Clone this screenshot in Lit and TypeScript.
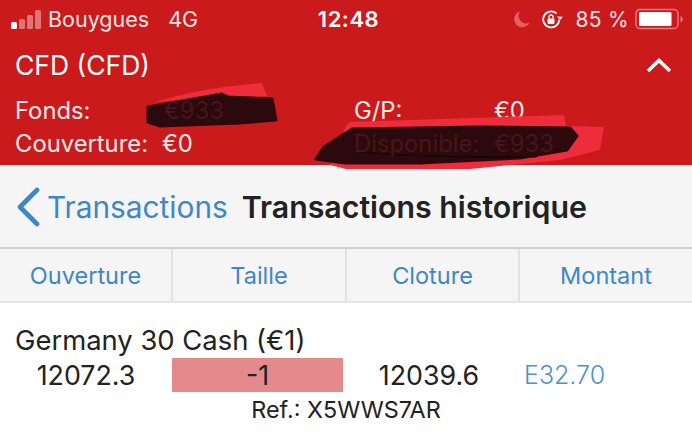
import { LitElement, html, css, svg } from "lit";
import { customElement } from "lit/decorators.js";

@customElement("app-root")
export class AppRoot extends LitElement {
  static styles = css`
    :host { display: block; width: 692px; height: 435px; overflow: hidden; position: relative; background: #fff; font-family: Inter, "Noto Sans", sans-serif; color: #222; }
    .red { background: #cb1a1c; color: #fff; height: 165px; display: flex; flex-direction: column; }
    .status { height: 38px; display: grid; grid-template-columns: 1fr auto 1fr; align-items: center; padding: 0 8px 0 11px; font-size: 21.5px; }
    .st-l { display: flex; align-items: center; color: #f8e4e4; white-space: nowrap; }
    .bars { display: flex; align-items: flex-end; gap: 2px; height: 19px; margin-right: 7px; }
    .bars i { width: 6px; border-radius: 1.5px; background: rgba(255,255,255,.4); display: block; }
    .bars i:first-child { background: #fff; }
    .net { margin-left: 19px; }
    .time { font-weight: 600; font-size: 22px; letter-spacing: .5px; margin-left: 2px; }
    .st-r { display: flex; align-items: center; justify-content: flex-end; color: #f8e4e4; }
    .pct { margin: 0 6px 0 13px; letter-spacing: .3px; white-space: nowrap; font-size: 21px; }
    .moon { margin-right: 12px; }
    .title { display: flex; justify-content: space-between; align-items: center; padding: 11px 20px 0 15px; font-size: 26.5px; height: 32px; }
    .stats { display: grid; grid-template-columns: 339px 140px auto; padding: 13px 0 0 15px; font-size: 23.8px; line-height: 33px; color: #fbeaea; }
    .stats div { white-space: nowrap; }
    .cov { display: flex; gap: 14px; }
    .fonds { display: flex; }
    .fonds span:first-child { width: 149px; }
    .hidden { position: relative; z-index: 2; color: #47151a; }
    .nav { height: 84px; background: #f5f5f5; border-bottom: 2px solid #cfcfcf; box-sizing: border-box; display: flex; align-items: center; padding: 2px 0 0 16px; }
    .nav svg { margin-right: 7px; flex: none; }
    .back { color: #3f86c8; font-size: 29.8px; margin-right: 14px; white-space: nowrap; }
    .h { font-weight: 600; font-size: 30.3px; color: #222; white-space: nowrap; }
    .tabs { height: 54px; background: #f5f5f5; border-bottom: 2px solid #e5e5e5; box-sizing: border-box; display: grid; grid-template-columns: 173px 174px 173px 172px; }
    .tabs div { display: flex; align-items: center; justify-content: center; color: #3f86c8; font-size: 23.5px; border-right: 2px solid #e2e2e2; }
    .tabs div:last-child { border-right: 0; }
    .body { padding-top: 21px; }
    .name { padding-left: 15px; font-size: 27.4px; line-height: 33px; height: 34px; white-space: nowrap; }
    .cells { display: grid; grid-template-columns: 172px 171px 172px auto; height: 34px; font-size: 26.8px; align-items: center; }
    .cells span { text-align: center; }
    .cells .neg { background: #e58a8c; align-self: stretch; display: flex; align-items: center; justify-content: center; }
    .cells .money { color: #4f8fce; font-weight: 300; padding-left: 9px; text-align: left; font-size: 25px; }
    .ref { text-align: center; font-size: 23.4px; line-height: 28px; margin-top: 4px; }
    .scribble { position: absolute; left: 0; top: 0; pointer-events: none; z-index: 1; }
  `;

  render() {
    return html`
      <div class="red">
        <div class="status">
          <div class="st-l">
            <span class="bars"><i style="height:7px"></i><i style="height:10px"></i><i style="height:14px"></i><i style="height:19px"></i></span>
            Bouygues<span class="net">4G</span>
          </div>
          <div class="time">12:48</div>
          <div class="st-r">
            <svg class="moon" width="17" height="17" viewBox="0 0 17 17"><path d="M7 0.5A8 8 0 1 0 16.5 11.5 A7.5 7.5 0 0 1 7 0.5Z" fill="#e26264"/></svg>
            <svg width="21" height="19" viewBox="0 0 21 19" fill="none" stroke="#fff" stroke-width="1.8">
              <path d="M17.2 9.5A8 8 0 1 1 14.5 3.4"/>
              <path d="M15 6.5 L18.2 10 L20.8 6.8" stroke="none" fill="#fff"/>
              <rect x="5.6" y="8.4" width="6.8" height="5.6" rx="1" fill="#fff" stroke="none"/>
              <path d="M7 8.6V7a2 2 0 0 1 4 0v1.6" stroke-width="1.3"/>
            </svg>
            <span class="pct">85 %</span>
            <svg width="49" height="22" viewBox="0 0 49 22">
              <rect x="1" y="1.5" width="42" height="19" rx="4" fill="none" stroke="#e97c7d" stroke-width="1.4"/>
              <rect x="4" y="4" width="32.5" height="14" rx="1.5" fill="#fff"/>
              <path d="M45.5 8a3.5 3.5 0 0 1 0 6.5z" fill="#e97c7d"/>
            </svg>
          </div>
        </div>
        <div class="title">
          <span>CFD (CFD)</span>
          <svg width="26" height="16" viewBox="0 0 26 16" fill="none" stroke="#fff" stroke-width="3.6"><path d="M2 14 L13 3.5 L24 14"/></svg>
        </div>
        <div class="stats">
          <div class="fonds"><span>Fonds:</span><span class="hidden">€933</span></div>
          <div>G/P:</div>
          <div>€0</div>
          <div class="cov"><span>Couverture:</span><span>€0</span></div>
          <div class="hidden">Disponible:</div>
          <div class="hidden">€933</div>
        </div>
      </div>
      <div class="nav">
        <svg width="24" height="40" viewBox="0 0 24 40" fill="none" stroke="#3f86c8" stroke-width="4.6" stroke-linecap="round" stroke-linejoin="round"><path d="M21 3 L4 20 L21 37"/></svg>
        <span class="back">Transactions</span>
        <span class="h">Transactions historique</span>
      </div>
      <div class="tabs"><div>Ouverture</div><div>Taille</div><div>Cloture</div><div>Montant</div></div>
      <div class="body">
        <div class="name">Germany 30 Cash (€1)</div>
        <div class="cells">
          <span>12072.3</span><span class="neg">-1</span><span>12039.6</span><span class="money">E32.70</span>
        </div>
        <div class="ref">Ref.: X5WWS7AR</div>
      </div>
      <svg class="scribble" width="692" height="435" viewBox="0 0 692 435">
        ${svg`
          <path d="M155 102 Q200 88 262 83 L267 96 L200 98 Z" fill="#ee2c3c"/>
          <path d="M148 107 L222 94 L228 97 L272 99 L276 120 L240 123 L160 126 L148 122 Z" fill="#2b090d" stroke="#2b090d" stroke-width="3" stroke-linejoin="round"/>
          <path d="M350 122 L564 115 L566 126 L604 127 L600 150 L560 160 L470 169 L346 169 L330 165 L346 126 Z" fill="#ee2c3c"/>
          <path d="M352 129 L480 127 L570 128 L577 136 L567 150 L520 158 L420 163 L345 163 L316 159 L324 147 Z" fill="#2b090d" stroke="#2b090d" stroke-width="3" stroke-linejoin="round"/>
          <path d="M357 152 Q430 158 536 157 L538 155" fill="none" stroke="#0a0204" stroke-width="1"/>
        `}
      </svg>
    `;
  }
}
